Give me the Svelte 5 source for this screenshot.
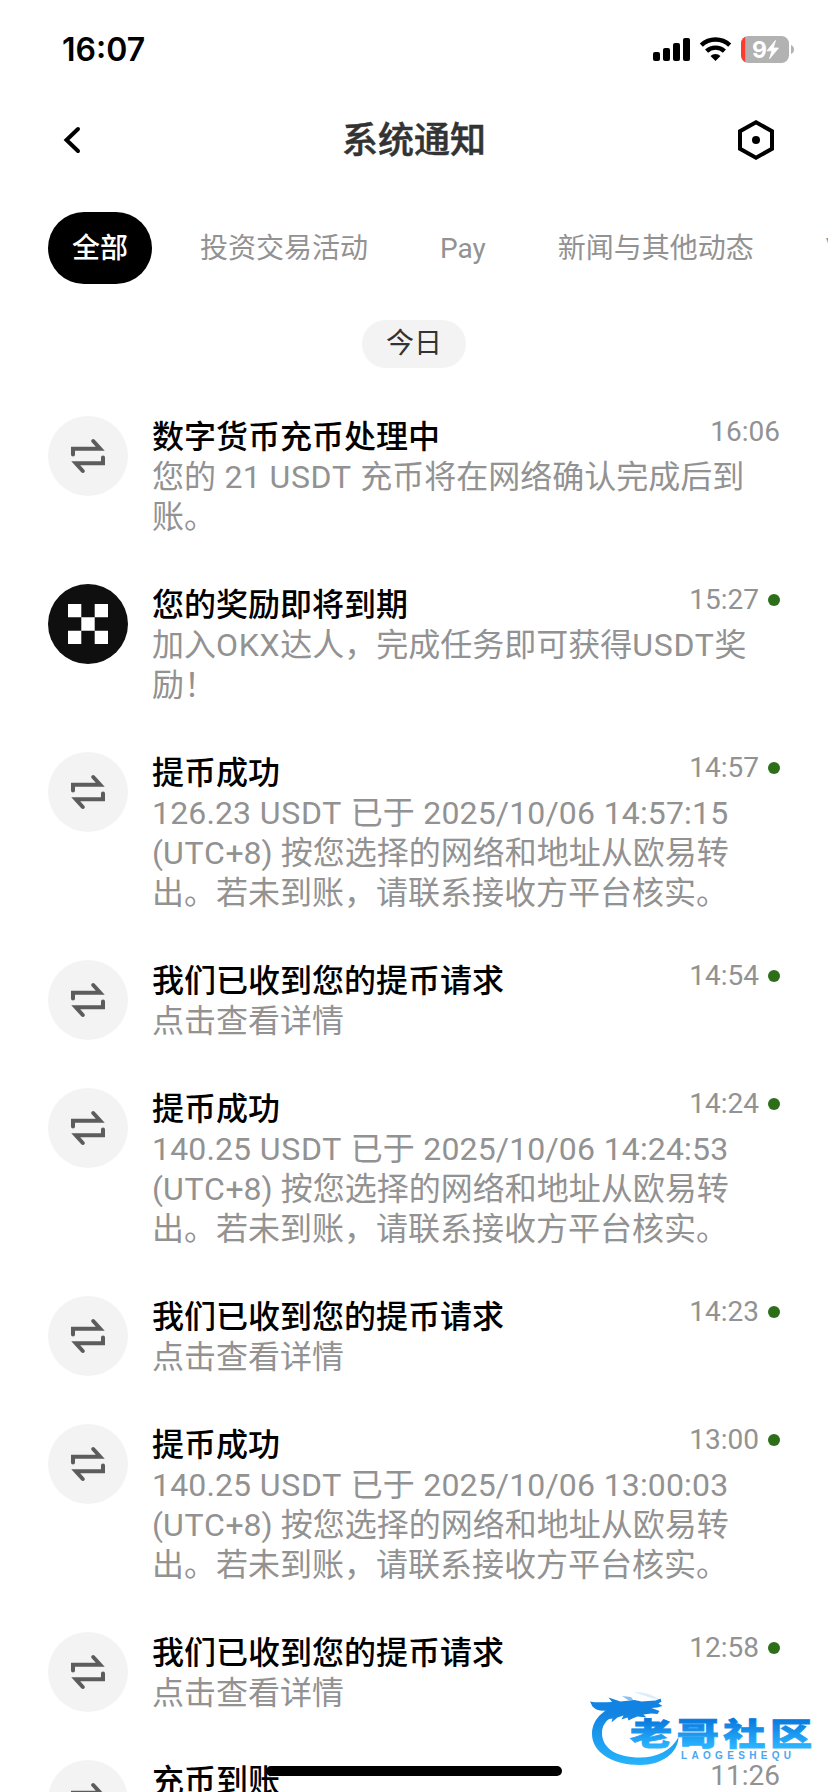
<script>
  const tabs = ['全部', '投资交易活动', 'Pay', '新闻与其他动态', 'VIP']
  let activeTab = $state('全部')

  const request = { title: '我们已收到您的提币请求', lines: ['点击查看详情'] }

  function withdrawal(amount, time) {
    return {
      title: '提币成功',
      lines: [
        `${amount} USDT 已于 2025/10/06 ${time}`,
        '(UTC+8) 按您选择的网络和地址从欧易转',
        '出。若未到账，请联系接收方平台核实。'
      ]
    }
  }

  const messages = [
    {
      title: '数字货币充币处理中',
      lines: ['您的 21 USDT 充币将在网络确认完成后到', '账。'],
      time: '16:06'
    },
    {
      title: '您的奖励即将到期',
      lines: ['加入OKX达人，完成任务即可获得USDT奖', '励！'],
      time: '15:27',
      unread: true,
      brand: true
    },
    { ...withdrawal('126.23', '14:57:15'), time: '14:57', unread: true },
    { ...request, time: '14:54', unread: true },
    { ...withdrawal('140.25', '14:24:53'), time: '14:24', unread: true },
    { ...request, time: '14:23', unread: true },
    { ...withdrawal('140.25', '13:00:03'), time: '13:00', unread: true },
    { ...request, time: '12:58', unread: true },
    { title: '充币到账', lines: [], time: '11:26' }
  ]

  // latin capitals and digits are tracked differently from the chinese text
  function runs(line) {
    return line.split(/([A-Z]+|[\d./:()+ ]+)/).filter(Boolean)
  }
</script>

<div class="screen">
  <div class="status-bar">
    <span class="clock">16:07</span>
    <svg class="status-icons" width="144" height="32" viewBox="652 34 144 32">
      <rect x="653" y="52" width="7" height="9" rx="2" />
      <rect x="663" y="48" width="7" height="13" rx="2" />
      <rect x="673" y="43" width="7" height="18" rx="2" />
      <rect x="683" y="38" width="7" height="23" rx="2" />
      <g fill="none" stroke="#000" stroke-width="4.4">
        <path d="M701.3 45.2a20.5 20.5 0 0 1 28.4 0" />
        <path d="M706.6 51.2a12.8 12.8 0 0 1 17.8 0" />
      </g>
      <path d="M715.5 61l-5-5a7.2 7.2 0 0 1 10 0z" />
      <clipPath id="battery"><rect x="741" y="36" width="48" height="27" rx="7.5" /></clipPath>
      <g clip-path="url(#battery)">
        <rect x="741" y="36" width="48" height="27" fill="#b2b2b2" />
        <rect x="741" y="36" width="4.2" height="27" fill="#ff3b30" />
      </g>
      <path d="M791 45c4 1.5 4 7.5 0 9z" fill="#b2b2b2" />
      <text x="752" y="58" class="battery-level">9</text>
      <path
        d="M775.500 40.500l-8.500 10.300h5l-2.500 8 9-10.800h-5.300z"
        fill="#fff"
        stroke="#fff"
        stroke-width="0.800"
        stroke-linejoin="round"
      />
    </svg>
  </div>

  <header>
    <button class="icon-button" aria-label="返回">
      <svg width="48" height="48" viewBox="0 0 48 48">
        <path
          d="M30 13L18.500 24L30 35"
          fill="none"
          stroke="#000"
          stroke-width="4"
          stroke-linecap="round"
        />
      </svg>
    </button>
    <h1>系统通知</h1>
    <button class="icon-button" aria-label="设置">
      <svg width="48" height="48" viewBox="0 0 48 48">
        <path d="M24 6.300l16 8.900v17.600l-16 8.900-16-8.900V15.200z" fill="none" stroke="#000" stroke-width="4" />
        <circle cx="24" cy="24" r="4" />
      </svg>
    </button>
  </header>

  <nav>
    {#each tabs as tab}
      <button class="tab" class:active={tab === activeTab} onclick={() => (activeTab = tab)}>
        {tab}
      </button>
    {/each}
  </nav>

  <div class="day"><span>今日</span></div>

  <ul>
    {#each messages as message}
      <li>
        {#if message.brand}
          <svg class="avatar" viewBox="0 0 80 80">
            <circle cx="40" cy="40" r="40" fill="#0f0f0f" />
            <path
              d="M20 20h13.300v13.300H20zM46.700 20H60v13.300H46.700zM33.300 33.300h13.400v13.400H33.300zM20 46.700h13.300V60H20zM46.700 46.700H60V60H46.700z"
              fill="#fff"
            />
          </svg>
        {:else}
          <svg class="avatar" viewBox="0 0 80 80">
            <circle cx="40" cy="40" r="40" fill="#f3f3f3" />
            <g fill="none" stroke="#5c5c5c" stroke-width="4" stroke-linecap="round">
              <path d="M25 38.500v-5.800h27.200L45.200 25" />
              <path d="M55 41.500v5.800H27.800L34.800 55" />
            </g>
          </svg>
        {/if}
        <div class="content">
          <h2>{message.title}</h2>
          {#each message.lines as line}
            <p>{#each runs(line) as run}<span class:caps={/^[A-Z]/.test(run)} class:digits={/^[\d ()]/.test(run)}>{run}</span>{/each}</p>
          {/each}
        </div>
        <div class="meta">
          <time>{message.time}</time>
          {#if message.unread}<i class="dot"></i>{/if}
        </div>
      </li>
    {/each}
  </ul>

  <div class="home-indicator"></div>

  <svg class="watermark" width="228" height="84" viewBox="588 1688 228 84">
    <defs>
      <linearGradient id="sky" gradientUnits="userSpaceOnUse" x1="0" y1="1700" x2="0" y2="1765">
        <stop offset="0.200" stop-color="#1283e2" />
        <stop offset="1" stop-color="#27b4fb" />
      </linearGradient>
      <linearGradient id="letters" gradientUnits="userSpaceOnUse" x1="0" y1="-26" x2="0" y2="2">
        <stop offset="0" stop-color="#0878dd" />
        <stop offset="1" stop-color="#2ab4ff" />
      </linearGradient>
    </defs>
    <g fill="url(#sky)">
      <!-- tail -->
      <path
        d="M632 1702C606 1705 592 1718 592 1734C592 1752 612 1765 640 1765C662 1765 678 1753 678.500 1737C672 1750 657 1757.500 640 1757.500C616 1757.500 602 1748 602 1733C602 1722 612 1714 626 1712z"
      />
      <!-- head, horns and whiskers -->
      <path
        d="M590 1701.500c9 1.500 15 .5 22 .5l-3.500-4.500 12 4 14-1.500 7 1.500 14-1 5-2 1 3-3 2 4 2.500-5 1.500-6 .5 8 3-2 3-6-.5-8 1 3 3-9-1-5 2-4 2-1-3-6 2 2-4-6 2-6 5 1-4-6 1 6-7-4-2c-8 1-13-.5-16-4z"
      />
      <path d="M634 1692c9 0 18 2 26 8l-9-2z" opacity="0.150" />
      <path d="M622 1696l9 1 3 4-6-1z" opacity="0.500" />
    </g>
    <g class="watermark-name" transform="translate(630 1745) scale(1.360 1)" fill="url(#letters)" stroke="url(#letters)">
      <text x="0" y="0" textLength="134" lengthAdjust="spacing">老哥社区</text>
    </g>
    <text class="watermark-latin" x="681" y="1759" textLength="110" lengthAdjust="spacing">LAOGESHEQU</text>
  </svg>
</div>

<style>
  :global(body) {
    margin: 0;
    background: #fff;
  }

  .screen {
    position: relative;
    width: 828px;
    height: 1792px;
    overflow: hidden;
    background: #fff;
    color: #000;
    font-family: Roboto, 'Noto Sans CJK SC', sans-serif;
  }

  button {
    padding: 0;
    border: 0;
    background: none;
    font: inherit;
    cursor: pointer;
  }

  .status-bar {
    display: flex;
    align-items: center;
    justify-content: space-between;
    height: 100px;
    padding: 0 32px 0 62px;
    box-sizing: border-box;
  }

  .clock {
    font: 600 32px/40px Inter, sans-serif;
  }

  .battery-level {
    font: 700 23px Inter, sans-serif;
    fill: #fff;
  }

  header {
    display: flex;
    align-items: center;
    justify-content: space-between;
    height: 80px;
    padding: 0 48px;
  }

  .icon-button,
  .icon-button svg {
    display: block;
    width: 48px;
    height: 48px;
  }

  h1 {
    margin: 0;
    padding-top: 2px;
    font-size: 36px;
    font-weight: 500;
    line-height: 48px;
    color: #333;
    -webkit-text-stroke: 0.5px #333;
  }

  nav {
    display: flex;
    gap: 24px;
    margin-top: 32px;
    padding-left: 48px;
  }

  .tab {
    flex: none;
    box-sizing: border-box;
    height: 72px;
    padding: 1px 24px 0;
    border-radius: 36px;
    font-size: 28px;
    line-height: 72px;
    white-space: nowrap;
    color: #929292;
  }

  .tab.active {
    background: #000;
    color: #fff;
    font-weight: 500;
  }

  .day {
    display: flex;
    justify-content: center;
    margin-top: 36px;
  }

  .day span {
    box-sizing: border-box;
    height: 48px;
    padding: 0 24px;
    border-radius: 24px;
    background: #f3f3f3;
    font-size: 28px;
    line-height: 48px;
    color: #333;
  }

  ul {
    display: flex;
    flex-direction: column;
    gap: 48px;
    margin: 48px 0 0;
    padding: 0 48px;
    list-style: none;
  }

  li {
    display: flex;
    align-items: flex-start;
  }

  .avatar {
    flex: none;
    width: 80px;
    height: 80px;
    margin-right: 24px;
  }

  .content {
    flex: 1;
    width: 0;
  }

  h2,
  p {
    box-sizing: border-box;
    height: 40px;
    margin: 0;
    padding-top: 1px;
    font-size: 32px;
    line-height: 40px;
    white-space: pre;
  }

  h2 {
    font-weight: 500;
  }

  p {
    font-weight: 400;
    color: #929292;
  }

  .caps {
    letter-spacing: 0.7px;
  }

  .digits {
    letter-spacing: 0.15px;
    word-spacing: 0.5px;
  }

  .meta {
    display: flex;
    align-items: center;
    gap: 9px;
    height: 32px;
  }

  time {
    font-size: 28px;
    line-height: 32px;
    color: #929292;
  }

  .dot {
    width: 12px;
    height: 12px;
    border-radius: 50%;
    background: #2d6f18;
  }

  .home-indicator {
    position: absolute;
    left: 266px;
    bottom: 16px;
    width: 296px;
    height: 10px;
    border-radius: 5px;
    background: #000;
  }

  .watermark {
    position: absolute;
    right: 12px;
    bottom: 20px;
  }

  .watermark-name {
    font: 900 31px 'Noto Sans CJK SC', sans-serif;
    stroke-width: 0.8px;
  }

  .watermark-latin {
    font: 700 10px 'Liberation Sans', sans-serif;
    fill: #4aa6ee;
  }
</style>
